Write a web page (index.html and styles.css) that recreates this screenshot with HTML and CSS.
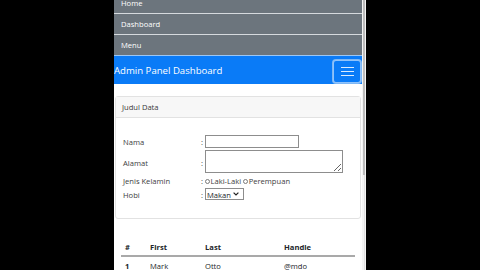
FILE: index.html
```html
<!DOCTYPE html>
<html lang="id">
<head>
    <meta charset="UTF-8">
    <meta name="viewport" content="width=device-width, initial-scale=1.0">
    <title>Admin Panel Dashboard</title>
    <link rel="stylesheet" href="styles.css">
</head>
<body>
    <div class="screen">
        <div class="page">
            <ul class="side-menu">
                <li>Home</li>
                <li>Dashboard</li>
                <li>Menu</li>
            </ul>

            <nav class="topbar">
                <span class="brand">Admin Panel Dashboard</span>
                <button class="toggler" type="button">
                    <span class="bar"></span>
                    <span class="bar"></span>
                    <span class="bar"></span>
                </button>
            </nav>

            <div class="card">
                <div class="card-header">Judul Data</div>
                <form class="card-body">
                    <label for="nama">Nama</label>
                    <span class="colon">:</span>
                    <input type="text" id="nama" class="input-nama">

                    <label for="alamat" class="label-alamat">Alamat</label>
                    <span class="colon label-alamat">:</span>
                    <textarea id="alamat" class="input-alamat"></textarea>

                    <label>Jenis Kelamin</label>
                    <span class="colon">:</span>
                    <div class="radios">
                        <input type="radio" name="jk" class="radio"><span>Laki-Laki</span>
                        <input type="radio" name="jk" class="radio gap"><span>Perempuan</span>
                    </div>

                    <label for="hobi">Hobi</label>
                    <span class="colon">:</span>
                    <div class="select-wrap">
                        <select id="hobi" class="input-hobi">
                            <option>Makan</option>
                            <option>Tidur</option>
                        </select>
                        <svg class="chevron" width="6" height="4" viewBox="0 0 6 4"><path d="M0.6 0.6 L3 3 L5.4 0.6" fill="none" stroke="#222" stroke-width="1.2"/></svg>
                    </div>
                </form>
            </div>

            <table class="data-table">
                <thead>
                    <tr>
                        <th class="col-num">#</th>
                        <th class="col-first">First</th>
                        <th class="col-last">Last</th>
                        <th>Handle</th>
                    </tr>
                </thead>
                <tbody>
                    <tr>
                        <th>1</th>
                        <td>Mark</td>
                        <td>Otto</td>
                        <td>@mdo</td>
                    </tr>
                    <tr>
                        <th>2</th>
                        <td>Jacob</td>
                        <td>Thornton</td>
                        <td>@fat</td>
                    </tr>
                </tbody>
            </table>
        </div>
        <div class="scrollbar">
            <div class="thumb"></div>
            <div class="track"></div>
        </div>
    </div>
</body>
</html>
```

FILE: styles.css
```css
body {
    margin: 0;
    background-color: #000000;
    display: flex;
    justify-content: center;
    height: 270px;
    overflow: hidden;
    font-family: "Open Sans", "Liberation Sans", sans-serif;
    font-size: 7.6px;
    color: #212529;
}
.screen {
    width: 252px;
    height: 270px;
    display: flex;
    background-color: #FFFFFF;
    overflow: hidden;
}
.page {
    width: 248px;
}

/* menu abu-abu di atas */
.side-menu {
    list-style: none;
    margin: -7px 0 0 0;
    padding: 0;
}
.side-menu li {
    height: 20px;
    line-height: 21px;
    padding-left: 7px;
    background-color: #6c757d;
    color: #FFFFFF;
    border-bottom: 1px solid #d6dade;
}
.side-menu li:last-child {
    border-bottom-color: #9cc7f5;
}

.topbar {
    height: 28px;
    background-color: #0a7bf7;
    display: flex;
    align-items: center;
    justify-content: space-between;
}
.brand {
    color: #FFFFFF;
    font-size: 9.6px;
    padding-top: 1px;
}
.toggler {
    width: 28px;
    height: 23px;
    margin: 2px 1px 0 0;
    padding: 0;
    background-color: #0a7bf7;
    border: 1px solid rgba(255, 255, 255, 0.55);
    border-radius: 3px;
    box-shadow: 0 0 0 1px #7fb8f5;
    display: flex;
    flex-direction: column;
    align-items: center;
    justify-content: center;
    gap: 3px;
}
.bar {
    width: 13px;
    height: 1px;
    background-color: rgba(255, 255, 255, 0.85);
}

.card {
    margin: 12px 1px 0 1px;
    border: 1px solid #e2e2e2;
    border-radius: 3px;
}
.card-header {
    height: 20px;
    line-height: 21px;
    padding-left: 6px;
    background-color: #f7f7f7;
    border-bottom: 1px solid #e2e2e2;
    color: #3a3a3a;
}
.card-body {
    display: grid;
    grid-template-columns: 78px 4px 1fr;
    row-gap: 2px;
    align-items: center;
    padding: 17px 0 18px 7px;
    margin: 0;
    color: #3d3d3d;
}
.card-body label,
.colon {
    line-height: 10px;
    padding-top: 1px;
}
.card-body .label-alamat {
    padding-top: 3px;
}
.input-nama {
    width: 94px;
    height: 13px;
    box-sizing: border-box;
    border: 1px solid #8d8d8d;
    padding: 0;
    margin: 0;
}
.input-alamat {
    width: 138px;
    height: 23px;
    box-sizing: border-box;
    border: 1px solid #8d8d8d;
    padding: 0;
    margin: 0;
    display: block;
}
.radios {
    display: flex;
    align-items: center;
    height: 10px;
    padding-top: 1px;
}
.radio {
    appearance: none;
    width: 5px;
    height: 5px;
    margin: 0 0.5px 0 0;
    border: 0.6px solid #7a7a7a;
    border-radius: 50%;
    box-sizing: border-box;
}
.radio.gap {
    margin-left: 2px;
}
.select-wrap {
    position: relative;
    width: 39px;
    height: 12px;
}
.input-hobi {
    appearance: none;
    width: 39px;
    height: 12px;
    box-sizing: border-box;
    border: 1px solid #8d8d8d;
    border-radius: 0;
    background-color: #FFFFFF;
    padding: 1px 0 0 1px;
    margin: 0;
    font-family: inherit;
    font-size: 7.6px;
    color: #212529;
}
.chevron {
    position: absolute;
    right: 5px;
    top: 4px;
}

.data-table {
    margin: 16px 7px 0 7px;
    width: 234px;
    border-collapse: collapse;
    table-layout: fixed;
}
.data-table th,
.data-table td {
    text-align: left;
    padding: 3px 4px;
    line-height: 12px;
}
.data-table thead th {
    padding: 6px 4px 2px 4px;
    border-bottom: 2px solid #a9a9a9;
}
.col-num {
    width: 17px;
}
.col-first {
    width: 47px;
}
.col-last {
    width: 71px;
}

.scrollbar {
    width: 4px;
    background-color: #f4f4f4;
    display: flex;
    flex-direction: column;
    align-items: center;
}
.thumb {
    width: 2px;
    height: 175px;
    background-color: #bcbcbc;
}
.track {
    width: 1px;
    flex: 1;
    background-color: #e0e0e0;
}
```
